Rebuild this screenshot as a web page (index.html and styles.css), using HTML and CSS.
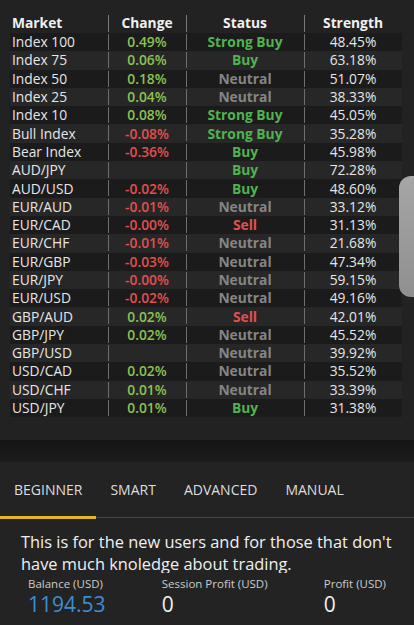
FILE: index.html
```html
<!DOCTYPE html>
<html lang="en">

<head>
    <meta charset="UTF-8">
    <meta name="viewport" content="width=device-width, initial-scale=1.0">
    <title>Market Strength</title>
    <link rel="stylesheet" href="styles.css">
</head>

<body>
    <div class="market-panel">
        <table class="market-table">
            <thead>
                <tr>
                    <th class="col-market">Market</th>
                    <th>Change</th>
                    <th>Status</th>
                    <th>Strength</th>
                </tr>
            </thead>
            <tbody>
                <tr><td>Index 100</td><td class="up">0.49%</td><td class="buy">Strong Buy</td><td>48.45%</td></tr>
                <tr><td>Index 75</td><td class="up">0.06%</td><td class="buy">Buy</td><td>63.18%</td></tr>
                <tr><td>Index 50</td><td class="up">0.18%</td><td class="neutral">Neutral</td><td>51.07%</td></tr>
                <tr><td>Index 25</td><td class="up">0.04%</td><td class="neutral">Neutral</td><td>38.33%</td></tr>
                <tr><td>Index 10</td><td class="up">0.08%</td><td class="buy">Strong Buy</td><td>45.05%</td></tr>
                <tr><td>Bull Index</td><td class="down">-0.08%</td><td class="buy">Strong Buy</td><td>35.28%</td></tr>
                <tr><td>Bear Index</td><td class="down">-0.36%</td><td class="buy">Buy</td><td>45.98%</td></tr>
                <tr><td>AUD/JPY</td><td></td><td class="buy">Buy</td><td>72.28%</td></tr>
                <tr><td>AUD/USD</td><td class="down">-0.02%</td><td class="buy">Buy</td><td>48.60%</td></tr>
                <tr><td>EUR/AUD</td><td class="down">-0.01%</td><td class="neutral">Neutral</td><td>33.12%</td></tr>
                <tr><td>EUR/CAD</td><td class="down">-0.00%</td><td class="sell">Sell</td><td>31.13%</td></tr>
                <tr><td>EUR/CHF</td><td class="down">-0.01%</td><td class="neutral">Neutral</td><td>21.68%</td></tr>
                <tr><td>EUR/GBP</td><td class="down">-0.03%</td><td class="neutral">Neutral</td><td>47.34%</td></tr>
                <tr><td>EUR/JPY</td><td class="down">-0.00%</td><td class="neutral">Neutral</td><td>59.15%</td></tr>
                <tr><td>EUR/USD</td><td class="down">-0.02%</td><td class="neutral">Neutral</td><td>49.16%</td></tr>
                <tr><td>GBP/AUD</td><td class="up">0.02%</td><td class="sell">Sell</td><td>42.01%</td></tr>
                <tr><td>GBP/JPY</td><td class="up">0.02%</td><td class="neutral">Neutral</td><td>45.52%</td></tr>
                <tr><td>GBP/USD</td><td></td><td class="neutral">Neutral</td><td>39.92%</td></tr>
                <tr><td>USD/CAD</td><td class="up">0.02%</td><td class="neutral">Neutral</td><td>35.52%</td></tr>
                <tr><td>USD/CHF</td><td class="up">0.01%</td><td class="neutral">Neutral</td><td>33.39%</td></tr>
                <tr><td>USD/JPY</td><td class="up">0.01%</td><td class="buy">Buy</td><td>31.38%</td></tr>
            </tbody>
        </table>
        <!-- fast scroll handle -->
        <div class="scroll-thumb"></div>
    </div>

    <div class="panel-gap"></div>

    <div class="mode-panel">
        <div class="mode-tabs">
            <a href="javascript:;" class="tab active">BEGINNER</a>
            <a href="javascript:;" class="tab">SMART</a>
            <a href="javascript:;" class="tab">ADVANCED</a>
            <a href="javascript:;" class="tab">MANUAL</a>
        </div>
        <div class="mode-desc">
            <p>This is for the new users and for those that don't have much knoledge about trading.</p>
        </div>
        <div class="stats">
            <div class="stat">
                <div class="stat-label">Balance (USD)</div>
                <div class="stat-value balance">1194.53</div>
            </div>
            <div class="stat">
                <div class="stat-label">Session Profit (USD)</div>
                <div class="stat-value">0</div>
            </div>
            <div class="stat">
                <div class="stat-label">Profit (USD)</div>
                <div class="stat-value">0</div>
            </div>
        </div>
    </div>
</body>

</html>
```

FILE: styles.css
```css
* {
    margin: 0;
    padding: 0;
    box-sizing: border-box;
}

body {
    width: 414px;
    height: 625px;
    overflow: hidden;
    background-color: #222222;
    font-family: "Open Sans", "Liberation Sans", sans-serif;
    color: #e6e6e6;
}

a {
    text-decoration: none;
}

.market-panel {
    position: relative;
    height: 440px;
    padding: 12px 12px 0 10px;
    background-color: #222222;
}

.market-table {
    width: 392px;
    border-collapse: separate;
    border-spacing: 0;
    font-size: 13.8px;
}

.market-table th {
    height: 21px;
    font-weight: 700;
    font-size: 13.8px;
    line-height: 21px;
    text-align: center;
    color: #f0f0f0;
    background-image: linear-gradient(#7a7a7a, #7a7a7a);
    background-repeat: no-repeat;
    background-size: 1px 17px;
    background-position: 0 3px;
}

.market-table td {
    height: 18.3px;
    line-height: 18px;
    text-align: center;
    background-image: linear-gradient(#6e6e6e, #6e6e6e);
    background-repeat: no-repeat;
    background-size: 1px 16px;
    background-position: 0 1px;
}

.market-table th:first-child,
.market-table td:first-child {
    text-align: left;
    padding-left: 2px;
    background-image: none;
}

.market-table th:nth-child(1) {
    width: 98px;
}

.market-table th:nth-child(2) {
    width: 78px;
}

.market-table th:nth-child(3) {
    width: 118px;
}

.market-table tbody tr:nth-child(odd) {
    background-color: #1b1b1b;
}

.market-table tbody tr:nth-child(even) {
    background-color: #272727;
}

.up {
    color: #8cc152;
    font-weight: 600;
}

.down {
    color: #e2504c;
    font-weight: 600;
}

.buy {
    color: #4fb34f;
    font-weight: 700;
}

.sell {
    color: #e2504c;
    font-weight: 700;
}

.neutral {
    color: #858585;
    font-weight: 700;
}

.scroll-thumb {
    position: absolute;
    right: 0;
    top: 176px;
    width: 15px;
    height: 121px;
    border-radius: 12px 0 0 12px;
    background: linear-gradient(#a6a6a6, #8f8f8f);
}

.panel-gap {
    height: 22px;
    background: linear-gradient(#151515, #1c1c1c);
}

.mode-panel {
    height: 163px;
    background-color: #232323;
}

.mode-tabs {
    display: flex;
    height: 56px;
    border-bottom: 1px solid #474747;
}

.tab {
    position: relative;
    padding: 0 14px;
    font-size: 14px;
    line-height: 56px;
    color: #dddddd;
}

.tab.active::after {
    content: "";
    position: absolute;
    left: 0;
    right: 0;
    bottom: -2px;
    height: 3px;
    background-color: #e2b523;
}

.mode-desc {
    height: 55px;
    overflow: hidden;
    padding: 13px 10px 0 21px;
}

.mode-desc p {
    font-size: 16.4px;
    line-height: 22px;
    color: #f0f0f0;
}

.stats {
    display: flex;
    justify-content: space-between;
    padding: 3px 28px 0;
}

.stat-label {
    font-size: 11.5px;
    line-height: 15px;
    color: #cccccc;
}

.stat-value {
    font-size: 21px;
    line-height: 27px;
    color: #f0f0f0;
}

.stat-value.balance {
    color: #3c8ed4;
}
```
